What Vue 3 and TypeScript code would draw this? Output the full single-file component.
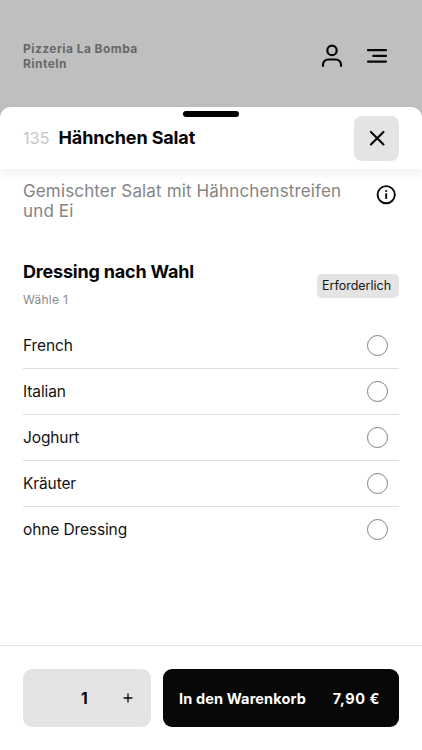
<script setup lang="ts">
import { ref } from 'vue'

const options: string[] = ['French', 'Italian', 'Joghurt', 'Kräuter', 'ohne Dressing']
const selected = ref<string | null>(null)
const quantity = ref<number>(1)
</script>

<template>
  <div class="screen">
    <header class="topbar">
      <div class="shop">Pizzeria La Bomba<br />Rinteln</div>
      <nav class="actions">
        <svg class="icon" viewBox="0 0 24 26">
          <circle cx="12" cy="7.4" r="4.7" />
          <path d="M3 22.9v-1.4a5 5 0 0 1 5-5h8a5 5 0 0 1 5 5v1.4" />
        </svg>
        <svg class="icon" viewBox="0 0 24 26">
          <path d="M3 7.2h18M8.3 12.9H21M3 18.6h18" />
        </svg>
      </nav>
    </header>
    <main class="sheet">
      <div class="sheet-head">
        <div class="handle"></div>
        <span class="number">135</span>
        <h1 class="title">Hähnchen Salat</h1>
        <button class="close" aria-label="Schließen">
          <svg viewBox="0 0 16 16"><path d="M1.9 1.9l12.6 12.6M14.5 1.9L1.9 14.5" /></svg>
        </button>
      </div>
      <div class="content">
        <div class="intro">
          <p class="desc">Gemischter Salat mit Hähnchenstreifen<br />und Ei</p>
          <svg class="info" viewBox="0 0 20 20">
            <circle cx="10.2" cy="9.7" r="8.6" />
            <path d="M10.2 8.3v5.6" />
            <circle class="dot" cx="10.2" cy="6" r="1.1" />
          </svg>
        </div>
        <div class="group">
          <div>
            <h2 class="group-title">Dressing nach Wahl</h2>
            <div class="hint">Wähle 1</div>
          </div>
          <span class="badge">Erforderlich</span>
        </div>
        <div class="options">
          <div v-for="o in options" :key="o" class="option" @click="selected = o">
            <span class="option-name">{{ o }}</span>
            <span class="radio" :class="{ on: selected === o }"></span>
          </div>
        </div>
      </div>
      <footer class="footer">
        <div class="stepper">
          <span></span>
          <span class="qty">{{ quantity }}</span>
          <svg class="plus" viewBox="0 0 10 10" @click="quantity++"><path d="M5 .6v8.8M.6 5h8.8" /></svg>
        </div>
        <button class="cart">
          <span class="cart-label">In den Warenkorb</span>
          <span class="price">7,90 €</span>
        </button>
      </footer>
    </main>
  </div>
</template>

<style>
body {
  background: #bfbfbf;
}
</style>

<style scoped>
.screen {
  box-sizing: border-box;
  height: 750px;
  display: flex;
  flex-direction: column;
  background: #bfbfbf;
  color: #050505;
  font-family: Inter, 'Liberation Sans', sans-serif;
  overflow: hidden;
}
.topbar {
  height: 107px;
  box-sizing: border-box;
  padding: 41px 33px 0 23px;
  display: flex;
  justify-content: space-between;
  flex: none;
}
.shop {
  font-size: 12px;
  line-height: 15px;
  font-weight: 650;
  letter-spacing: 0.44px;
  color: #686868;
}
.actions {
  display: flex;
  gap: 21px;
}
.icon {
  width: 24px;
  height: 26px;
  margin-top: 2px;
  fill: none;
  stroke: #080808;
  stroke-width: 2.2;
  stroke-linecap: round;
}
.sheet {
  flex: 1;
  min-height: 0;
  display: flex;
  flex-direction: column;
  background: #fff;
  border-radius: 11px 11px 0 0;
}
.sheet-head {
  position: relative;
  height: 62px;
  box-sizing: border-box;
  padding: 0 23px;
  flex: none;
  display: flex;
  align-items: center;
  border-radius: 11px 11px 0 0;
  box-shadow: 0 5px 10px rgba(0, 0, 0, 0.06);
}
.handle {
  position: absolute;
  left: 183px;
  top: 4px;
  width: 56px;
  height: 6px;
  border-radius: 3px;
  background: #000;
}
.number {
  width: 35.5px;
  font-size: 16.5px;
  color: #c6c6c6;
  font-weight: 400;
  letter-spacing: -0.2px;
}
.title {
  margin: 0;
  flex: 1;
  font-size: 18px;
  line-height: 22px;
  font-weight: 650;
  letter-spacing: -0.13px;
  white-space: nowrap;
}
.close {
  width: 45px;
  height: 45px;
  padding: 0;
  border: 0;
  border-radius: 8px;
  background: #e4e4e4;
  display: flex;
  align-items: center;
  justify-content: center;
}
.close svg {
  width: 16px;
  height: 16px;
  fill: none;
  stroke: #080808;
  stroke-width: 2.1;
  stroke-linecap: round;
}
.content {
  flex: 1;
  padding: 12px 23px 0;
}
.intro {
  display: flex;
  justify-content: space-between;
}
.desc {
  margin: 0;
  font-size: 17px;
  line-height: 20px;
  letter-spacing: 0.14px;
  color: #858585;
  white-space: nowrap;
}
.info {
  width: 20px;
  height: 20px;
  margin: 4px 3px 0 0;
  fill: none;
  stroke: #080808;
  stroke-width: 1.9;
}
.info .dot {
  fill: #080808;
  stroke: none;
}
.group {
  display: flex;
  justify-content: space-between;
  margin-top: 40px;
}
.group-title {
  margin: 0;
  font-size: 18px;
  line-height: 22px;
  font-weight: 650;
  letter-spacing: -0.19px;
}
.hint {
  margin-top: 9px;
  font-size: 12px;
  line-height: 15px;
  letter-spacing: 0.27px;
  color: #8a8a8a;
}
.badge {
  box-sizing: border-box;
  width: 82px;
  height: 24px;
  margin-top: 13px;
  padding-left: 5px;
  border-radius: 5px;
  background: #e4e4e4;
  font-size: 12.5px;
  line-height: 24px;
  color: #171717;
}
.options {
  margin-top: 16px;
}
.option {
  box-sizing: border-box;
  height: 46px;
  padding-right: 11px;
  display: flex;
  align-items: center;
  justify-content: space-between;
  border-bottom: 1px solid #dfdfdf;
}
.option:last-child {
  border-bottom-color: transparent;
}
.option-name {
  font-size: 15.5px;
  line-height: 20px;
  letter-spacing: -0.12px;
  color: #121212;
}
.radio {
  box-sizing: border-box;
  width: 21px;
  height: 21px;
  border: 1px solid #808080;
  border-radius: 50%;
}
.radio.on {
  border-width: 6px;
  border-color: #080808;
}
.footer {
  flex: none;
  height: 105px;
  box-sizing: border-box;
  padding: 23px 23px 0;
  display: flex;
  align-items: flex-start;
  gap: 12px;
  border-top: 1px solid #e2e2e2;
}
.stepper {
  box-sizing: border-box;
  width: 128.4px;
  height: 58px;
  padding: 0 18px;
  border-radius: 9px;
  background: #e4e4e4;
  display: grid;
  grid-template-columns: 37px 1fr 10px;
  align-items: center;
}
.qty {
  padding-left: 3px;
  font-size: 15.5px;
  font-weight: 700;
}
.plus {
  width: 10px;
  height: 10px;
  fill: none;
  stroke: #080808;
  stroke-width: 1.3;
}
.cart {
  flex: 1;
  height: 58px;
  padding: 0 19.5px 0 15.6px;
  border: 0;
  border-radius: 9px;
  background: #080808;
  color: #fff;
  display: flex;
  align-items: center;
  justify-content: space-between;
  font-family: inherit;
  font-size: 14.5px;
  font-weight: 650;
  letter-spacing: 0.14px;
  white-space: nowrap;
}
.price {
  letter-spacing: 0.6px;
  margin-right: -0.6px;
}
</style>
